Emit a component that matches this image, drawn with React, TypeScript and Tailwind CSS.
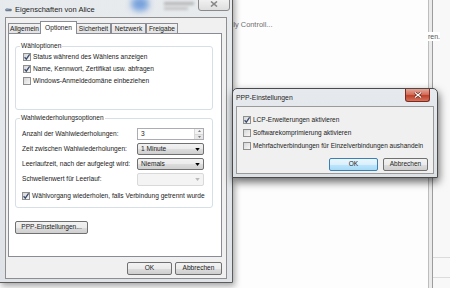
import React from 'react'

function Check({ checked }: { checked?: boolean }) {
  return (
    <span className="relative inline-block w-[8px] h-[8px] shrink-0 border border-[#8e8f8f] bg-[linear-gradient(135deg,#d6d6d6,#f7f7f7)]">
      {checked && (
        <svg viewBox="0 0 8 8" className="absolute left-[-1px] top-[-1px] w-[8px] h-[8px]">
          <path d="M1.6 4.2 L3.3 6.1 L6.6 1.3" stroke="#3a4a6e" strokeWidth="1.3" fill="none" />
        </svg>
      )}
    </span>
  )
}

function CheckRow({ checked, label }: { checked?: boolean; label: string }) {
  return (
    <div className="flex items-center gap-[2px] h-[10px]">
      <Check checked={checked} />
      <span className="whitespace-nowrap">{label}</span>
    </div>
  )
}

function WinButton({ label, w, isDefault }: { label: string; w: string; isDefault?: boolean }) {
  return (
    <div
      className={
        isDefault
          ? `${w} h-[13px] rounded-[2px] border border-[#3c7fb1] bg-[linear-gradient(to_bottom,#eaf6fd_0%,#d9f0fc_50%,#bee6fd_51%,#a7d9f5_100%)] flex items-center justify-center`
          : `${w} h-[13px] rounded-[2px] border border-[#707070] bg-[linear-gradient(to_bottom,#f2f2f2_0%,#ebebeb_50%,#dddddd_51%,#cfcfcf_100%)] flex items-center justify-center`
      }
    >
      <span className="leading-none">{label}</span>
    </div>
  )
}

function Combo({ value, disabled }: { value?: string; disabled?: boolean }) {
  if (disabled) {
    return (
      <div className="w-[67px] h-[13px] rounded-[2px] border border-[#d9d9d9] bg-[#f4f4f4] flex items-center justify-end pr-[3px]">
        <svg viewBox="0 0 6 4" className="w-[5px] h-[3px]">
          <path d="M0 0 L6 0 L3 4 Z" fill="#b8b8b8" />
        </svg>
      </div>
    )
  }
  return (
    <div className="w-[67px] h-[12px] rounded-[2px] border border-[#707070] bg-[linear-gradient(to_bottom,#f2f2f2_0%,#ebebeb_50%,#dddddd_51%,#cfcfcf_100%)] flex items-center justify-between pl-[3px] pr-[3px]">
      <span className="leading-none">{value}</span>
      <svg viewBox="0 0 6 4" className="w-[5px] h-[3px]">
        <path d="M0 0 L6 0 L3 4 Z" fill="#000" />
      </svg>
    </div>
  )
}

function Spin({ value }: { value: string }) {
  return (
    <div className="w-[67px] h-[12px] border border-[#abadb3] bg-white flex items-center">
      <span className="flex-1 pl-[3px] leading-none">{value}</span>
      <div className="w-[9px] h-full flex flex-col border-l border-[#d8d8d8]">
        <div className="flex-1 flex items-center justify-center bg-[#f2f2f2] border-b border-[#d8d8d8]">
          <svg viewBox="0 0 4 2" className="w-[3px] h-[2px]">
            <path d="M0 2 L4 2 L2 0 Z" fill="#555" />
          </svg>
        </div>
        <div className="flex-1 flex items-center justify-center bg-[#e6e6e6]">
          <svg viewBox="0 0 4 2" className="w-[3px] h-[2px]">
            <path d="M0 0 L4 0 L2 2 Z" fill="#555" />
          </svg>
        </div>
      </div>
    </div>
  )
}

function FieldRow({ label, children }: { label: string; children: React.ReactNode }) {
  return (
    <div className="flex items-center justify-between h-[12px] mb-[3px]">
      <span className="whitespace-nowrap">{label}</span>
      {children}
    </div>
  )
}

const tabs = [
  { label: 'Allgemein', w: 'w-[33px]' },
  { label: 'Optionen', w: 'w-[37px]', active: true },
  { label: 'Sicherheit', w: 'w-[35px]' },
  { label: 'Netzwerk', w: 'w-[35px]' },
  { label: 'Freigabe', w: 'w-[32px]' },
]

export default function App() {
  return (
    <div className="relative w-[450px] h-[288px] overflow-hidden bg-[#fdfdfd] font-['Liberation_Sans',Arial,sans-serif] text-[6.6px] text-[#1b1b1b]">
      {/* window behind */}
      <span className="absolute left-[217px] top-[19px] text-[7.4px] text-[#6f6f6f] whitespace-nowrap">Family Controll...</span>
      <div className="absolute left-[428px] top-0 bottom-0 w-[5px] border-l border-r border-l-[#bdbdbd] border-r-[#9c9c9c] bg-[#ebebeb]" />
      <div className="absolute left-[433px] right-0 top-0 bottom-0 bg-[#f8f8f8]">
        <div className="absolute left-0 right-0 top-[257px] h-px bg-[#dcdcdc]" />
        <div className="absolute left-0 right-0 top-[277px] h-px bg-[#dcdcdc]" />
      </div>
      <span className="absolute left-[428px] top-[32px] bg-white text-[7px] text-[#555] leading-[9px] whitespace-nowrap">ren.</span>

      {/* main dialog */}
      <div className="absolute left-[-1px] top-[-10px] w-[234px] h-[293px] rounded-t-[6px] border border-[#5c5c5c] bg-[linear-gradient(to_bottom,#e8ebee,#dfe3e7)] shadow-[2px_3px_6px_rgba(0,0,0,0.35)] flex flex-col">
        <div className="relative h-[26px] shrink-0">
          <div className="absolute left-[131px] top-[6px] w-[18px] h-[14px] rounded-full bg-[#5a8fd8] blur-[3px] opacity-80" />
          <div className="absolute left-[164px] top-[11px] w-[30px] h-[3px] bg-[#9a9a9a] blur-[1.5px] opacity-70" />
          <div className="absolute left-[164px] top-[16px] w-[24px] h-[3px] bg-[#a8a8a8] blur-[1.5px] opacity-60" />
          <div className="absolute left-[5px] top-[14px] flex items-center gap-[3px]">
            <svg viewBox="0 0 8 5" className="w-[7px] h-[4px]">
              <rect x="0" y="1" width="8" height="3" rx="1" fill="#6c7b8f" />
              <rect x="1" y="0" width="3" height="2" fill="#9fb3c8" />
            </svg>
            <span className="text-[7.5px] leading-[10px] text-[#1e1e1e] whitespace-nowrap">Eigenschaften von Alice</span>
          </div>
          <div className="absolute left-[198px] top-[6px] w-[32px] h-[14px] rounded-b-[3px] border border-[#8a8a8a] bg-[linear-gradient(to_bottom,#f4f4f4,#dedede)] flex items-center justify-center">
            <svg viewBox="0 0 8 6" className="w-[8px] h-[6px]">
              <path d="M1 0.5 L7 5.5 M7 0.5 L1 5.5" stroke="#888" strokeWidth="1.6" />
            </svg>
          </div>
        </div>

        <div className="flex-1 mx-[5px] mb-[3px] border border-[#8e8e8e] bg-[#f0f0f0] flex flex-col">
          <div className="ml-[2px] mt-[3px] h-[12px] flex items-end">
            {tabs.map(t =>
              t.active ? (
                <div
                  key={t.label}
                  className={`${t.w} h-[13px] -mx-px z-10 border border-b-0 border-[#898c95] bg-white flex items-center justify-center translate-y-px`}
                >
                  {t.label}
                </div>
              ) : (
                <div
                  key={t.label}
                  className={`${t.w} h-[10px] border border-b-0 border-[#898c95] bg-[linear-gradient(to_bottom,#f2f2f2,#e3e3e3)] flex items-center justify-center`}
                >
                  {t.label}
                </div>
              )
            )}
          </div>

          <div className="ml-[2px] mr-[4px] h-[224px] border border-[#898c95] bg-white flex flex-col">
            {/* Wähloptionen */}
            <div className="relative ml-[6px] mt-[12px] w-[198px] h-[64px] rounded-[3px] border border-[#d5dfe5] pl-[7px] pt-[5px] flex flex-col gap-[2px]">
              <span className="absolute left-[4px] top-[-6px] px-[1px] bg-white leading-[10px]">Wähloptionen</span>
              <CheckRow checked label="Status während des Wählens anzeigen" />
              <CheckRow checked label="Name, Kennwort, Zertifikat usw. abfragen" />
              <CheckRow label="Windows-Anmeldedomäne einbeziehen" />
            </div>

            {/* Wahlwiederholungsoptionen */}
            <div className="relative ml-[6px] mt-[8px] w-[198px] h-[90px] rounded-[3px] border border-[#d5dfe5] pl-[6px] pr-[8px] pt-[9px] flex flex-col">
              <span className="absolute left-[4px] top-[-6px] px-[1px] bg-white leading-[10px]">Wahlwiederholungsoptionen</span>
              <FieldRow label="Anzahl der Wahlwiederholungen:">
                <Spin value="3" />
              </FieldRow>
              <FieldRow label="Zeit zwischen Wahlwiederholungen:">
                <Combo value="1 Minute" />
              </FieldRow>
              <FieldRow label="Leerlaufzeit, nach der aufgelegt wird:">
                <Combo value="Niemals" />
              </FieldRow>
              <FieldRow label="Schwellenwert für Leerlauf:">
                <Combo disabled />
              </FieldRow>
              <div className="mt-[3px]">
                <CheckRow checked label="Wählvorgang wiederholen, falls Verbindung getrennt wurde" />
              </div>
            </div>

            <div className="ml-[6px] mt-[13px]">
              <WinButton label="PPP-Einstellungen..." w="w-[73px]" />
            </div>
          </div>

          <div className="mt-[5px] mr-[4px] flex justify-end gap-[3px]">
            <WinButton label="OK" w="w-[45px]" />
            <WinButton label="Abbrechen" w="w-[47px]" />
          </div>
        </div>
      </div>

      {/* PPP-Einstellungen dialog */}
      <div className="absolute left-[232px] top-[88px] w-[206px] h-[90px] rounded-t-[5px] border border-[#4a4a4a] bg-[linear-gradient(to_bottom,#e6eaee,#dce1e6)] shadow-[1px_4px_9px_rgba(0,0,0,0.6)] flex flex-col text-[6.5px]">
        <div className="relative h-[17px] shrink-0">
          <span className="absolute left-[3px] top-[4px] text-[6.8px] leading-[10px] text-[#1e1e1e] whitespace-nowrap">PPP-Einstellungen</span>
          <div className="absolute left-[172px] top-0 w-[25px] h-[13px] rounded-b-[3px] border border-t-0 border-[#7a2a20] bg-[linear-gradient(to_bottom,#e7a597_0%,#d3705d_45%,#c0402a_55%,#d2755e_100%)] flex items-center justify-center">
            <svg viewBox="0 0 8 6" className="w-[8px] h-[6px]">
              <path d="M1 0.5 L7 5.5 M7 0.5 L1 5.5" stroke="#5a1a10" strokeWidth="2.4" />
              <path d="M1 0.5 L7 5.5 M7 0.5 L1 5.5" stroke="#fff" strokeWidth="1.3" />
            </svg>
          </div>
        </div>
        <div className="flex-1 mx-[3px] mb-[3px] border border-[#9a9a9a] bg-[#f0f0f0] pl-[6px] pr-[5px] pt-[8px] flex flex-col">
          <div className="flex flex-col gap-[3px]">
            <CheckRow checked label="LCP-Erweiterungen aktivieren" />
            <CheckRow label="Softwarekomprimierung aktivieren" />
            <CheckRow label="Mehrfachverbindungen für Einzelverbindungen aushandeln" />
          </div>
          <div className="mt-[7px] flex justify-end gap-[5px]">
            <WinButton label="OK" w="w-[49px]" isDefault />
            <WinButton label="Abbrechen" w="w-[45px]" />
          </div>
        </div>
      </div>
    </div>
  )
}
